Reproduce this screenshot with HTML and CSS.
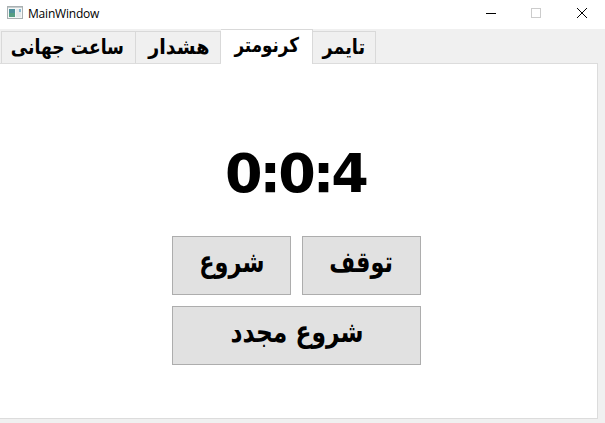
FILE: index.html
```html
<!DOCTYPE html>
<html lang="fa"><head><meta charset="utf-8"><title>MainWindow</title><link rel="stylesheet" href="styles.css"></head>
<body>
<header class="titlebar">
<svg class="app-icon" width="16" height="14" viewBox="0 0 16 14"><rect x=".5" y=".5" width="15" height="12" fill="#f4f7f7" stroke="#a9b0b2"/><path d="M1 1.5h14" stroke="#c6cccd"/><rect x="2" y="3" width="6" height="8" fill="#4d8f9b"/><rect x="2" y="7" width="6" height="4" fill="#569e83"/><rect x="9" y="3" width="5" height="8" fill="#e5eaec"/><rect x="12" y="3" width="2" height="3" fill="#86b7cf"/></svg>
<span class="title">MainWindow</span>
<div class="controls">
<svg width="46" height="28" viewBox="0 0 46 28"><path d="M18 13.5h10" stroke="#000"/></svg>
<svg width="46" height="28" viewBox="0 0 46 28"><rect x="17.5" y="8.5" width="9" height="9" fill="none" stroke="#ccc"/></svg>
<svg width="46" height="28" viewBox="0 0 46 28"><path d="M17 8l10 10M27 8L17 18" stroke="#000"/></svg>
</div>
</header>
<nav class="tabs">
<div class="tab world"><span>ساعت جهانی</span></div>
<div class="tab alarm"><span>هشدار</span></div>
<div class="tab active"><span>کرنومتر</span></div>
<div class="tab timer"><span>تایمر</span></div>
</nav>
<main class="panel">
<div class="clock">0:0:4</div>
<div class="buttons">
<button><span>شروع</span></button><button><span>توقف</span></button><button class="wide"><span>شروع مجدد</span></button>
</div>
</main>
</body></html>
```
FILE: styles.css
```css
*{box-sizing:border-box}
body{margin:0;width:605px;height:423px;background:#f0f0f0;overflow:hidden;font-family:"DejaVu Sans",sans-serif;color:#000}
.titlebar{height:29px;background:#fff;display:flex;align-items:center;padding-left:7px}
.app-icon{margin-bottom:3px}
.title{font:12px "Open Sans",sans-serif;margin-left:5px;margin-bottom:2px;letter-spacing:-.2px}
.controls{display:flex;margin-left:auto;margin-right:-1px;margin-bottom:1px}
.tabs{display:flex;align-items:flex-end;height:34px;padding-left:1px}
.tab{height:32px;border:1px solid #d9d9d9;border-left-width:0;border-bottom:0;display:flex;align-items:center;justify-content:center;font-weight:700;font-size:18px;direction:rtl;white-space:nowrap}
.tab span{display:block;margin-bottom:3px}
.world{width:135px;border-left-width:1px}
.world span{transform:translateX(-1px) scale(.955,1.14)}
.alarm{width:85px}
.alarm span{transform:translateX(1px) scale(1.06,1.14)}
.active{width:92px;height:35px;background:#fff;margin-bottom:-1px;z-index:1}
.active span{transform:scale(.93,1.14);margin-bottom:5px}
.timer{width:63px}
.timer span{transform:scale(.98,1.14)}
.panel{width:598px;height:356px;border:1px solid #dcdcdc;border-left:0;background:#fff;display:flex;flex-direction:column;align-items:center;padding-top:77px;padding-right:4px}
.clock{font:700 54px/66px "DejaVu Sans",sans-serif;height:95px;letter-spacing:-3px;margin-right:2px}
.buttons{display:grid;grid-template-columns:119px 119px;gap:11px;grid-auto-rows:59px}
button{margin:0;padding:0 0 5px;background:#e1e1e1;border:1px solid #adadad;font:700 26px "DejaVu Sans",sans-serif;color:#000;direction:rtl}
button span{display:inline-block;transform:translateY(-1px) scale(.86,1.12)}
.wide{grid-column:1/3}
.wide span{transform:translateY(-1px) scale(.9,1.12)}
```
